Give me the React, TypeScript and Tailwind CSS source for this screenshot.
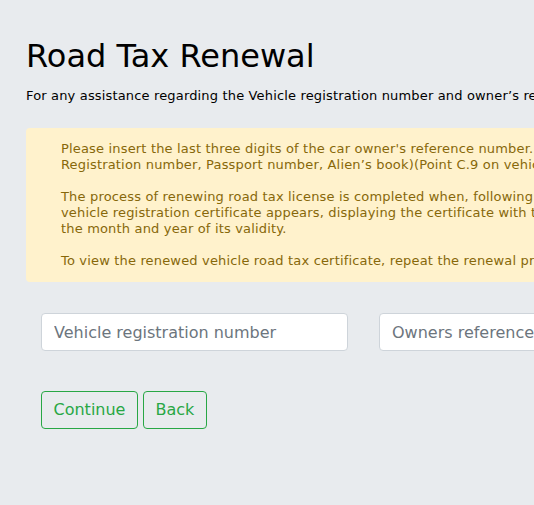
import React from "react";

export default function App() {
  return (
    <div
      className="min-h-[505px] w-[534px] overflow-hidden bg-[#e8ebee] text-black"
      style={{ fontFamily: '"DejaVu Sans", Verdana, sans-serif' }}
    >
      <div className="w-[1100px] pl-[26px] pt-[34px]">
        <h1 className="text-[32px] leading-[44px] font-normal">Road Tax Renewal</h1>
        <p className="mt-[9px] text-[13px] leading-[18px] tracking-[0.16px]">
          For any assistance regarding the Vehicle registration number and owner’s reference number please contact the department.
        </p>

        <div className="mt-[23px] w-[1000px] rounded-[4px] bg-[#fff2cc] py-[13px] pl-[35px] pr-4 text-[13px] leading-[16px] tracking-[0.17px] text-[#87680a]">
          <p>
            Please insert the last three digits of the car owner's reference number. (Identity card number, Company
            <br />
            Registration number, Passport number, Alien’s book)(Point C.9 on vehicle registration certificate).
          </p>
          <p className="mt-[16px]">
            The process of renewing road tax license is completed when, following the payment, the message with the
            <br />
            vehicle registration certificate appears, displaying the certificate with the new road tax license and
            <br />
            the month and year of its validity.
          </p>
          <p className="mt-[16px]">
            To view the renewed vehicle road tax certificate, repeat the renewal procedure.
          </p>
        </div>

        <div className="mt-[31px] flex gap-[31px] pl-[15px]">
          <input
            className="h-[38px] w-[307px] rounded-[4px] border border-[#ced4da] bg-white px-[12px] text-[16px] outline-none placeholder:text-[#6c757d]"
            placeholder="Vehicle registration number"
          />
          <input
            className="h-[38px] w-[307px] rounded-[4px] border border-[#ced4da] bg-white px-[12px] text-[16px] outline-none placeholder:text-[#6c757d]"
            placeholder="Owners reference number"
          />
        </div>

        <div className="mt-[40px] flex gap-[5px] pl-[15px]">
          <button className="h-[38px] rounded-[4px] border border-[#28a745] px-[11.5px] text-[16px] text-[#28a745]">
            Continue
          </button>
          <button className="h-[38px] rounded-[4px] border border-[#28a745] px-[11.5px] text-[16px] text-[#28a745]">
            Back
          </button>
        </div>
      </div>
    </div>
  );
}
